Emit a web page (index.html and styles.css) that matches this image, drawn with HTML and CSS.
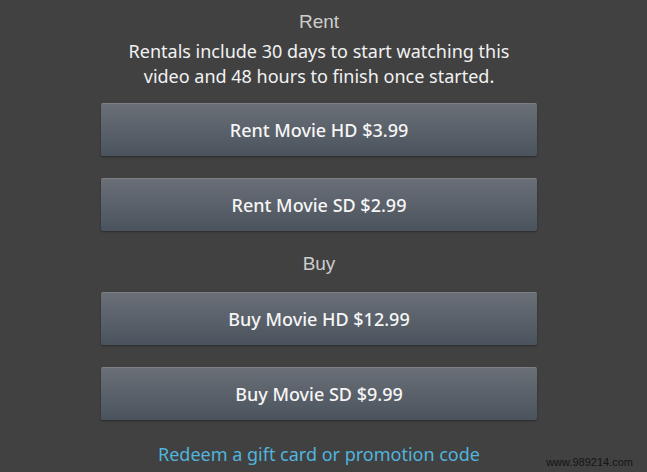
FILE: index.html
```html
<!DOCTYPE html>
<html lang="en">
<head>
    <meta charset="UTF-8">
    <title>Rent or Buy</title>
    <link rel="stylesheet" href="styles.css">
</head>
<body>
    <div class="purchase">
        <h2 class="section-title">Rent</h2>
        <p class="note">Rentals include 30 days to start watching this<br>video and 48 hours to finish once started.</p>
        <button class="offer">Rent Movie HD $3.99</button>
        <button class="offer">Rent Movie SD $2.99</button>

        <h2 class="section-title buy">Buy</h2>
        <button class="offer">Buy Movie HD $12.99</button>
        <button class="offer">Buy Movie SD $9.99</button>

        <a class="redeem" href="#">Redeem a gift card or promotion code</a>
    </div>

    <span class="watermark">www.989214.com</span>
</body>
</html>
```

FILE: styles.css
```css
body {
    margin: 0;
    padding: 0 9px 0 0;
    height: 472px;
    overflow: hidden;
    background-color: #414141;
    font-family: 'Noto Sans', 'Open Sans', sans-serif;
    position: relative;
}

.purchase {
    width: 436px;
    margin: 0 auto;
    display: flex;
    flex-direction: column;
    align-items: stretch;
    text-align: center;
}

.section-title {
    margin: 10px 0 0;
    font-family: 'Liberation Sans', Arial, sans-serif;
    font-weight: normal;
    font-size: 19px;
    line-height: 24px;
    color: #cdcdcd;
}

.section-title.buy {
    margin-top: -1px;
    margin-bottom: 16px;
}

.note {
    margin: 5px -40px 14px;
    font-size: 18px;
    line-height: 25px;
    color: #f2f2f2;
}

.offer {
    height: 53px;
    margin-bottom: 22px;
    border: none;
    border-top: 1px solid #7c8188;
    border-radius: 2px;
    background: linear-gradient(#6a6f77, #4a535d);
    box-shadow: 0 1px 2px rgba(0, 0, 0, 0.35);
    font-family: 'Noto Sans', 'Open Sans', sans-serif;
    font-size: 18px;
    font-weight: 500;
    color: #f6f6f6;
    cursor: pointer;
}

.redeem {
    margin-top: 0;
    font-size: 18px;
    line-height: 24px;
    color: #52b4dc;
    text-decoration: none;
}

.watermark {
    position: absolute;
    right: 14px;
    bottom: 4px;
    font-family: 'Liberation Sans', Arial, sans-serif;
    font-size: 11px;
    color: #141414;
}
```
